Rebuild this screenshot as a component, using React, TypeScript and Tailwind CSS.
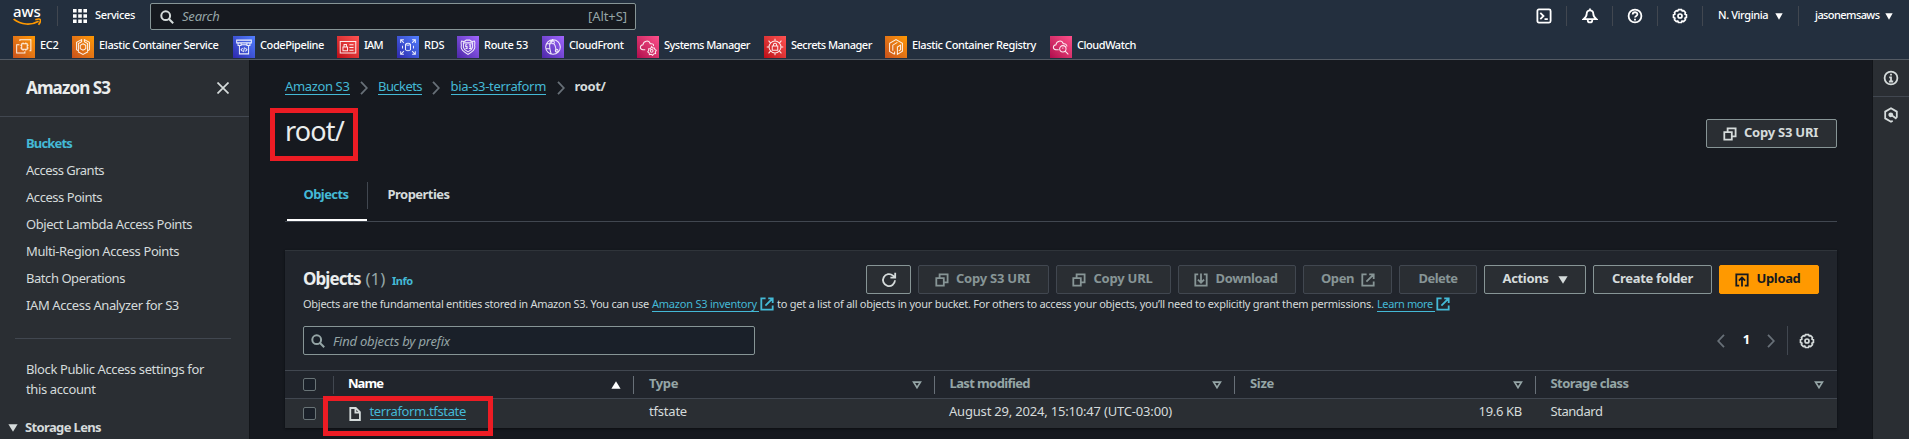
import type { ReactNode } from "react";

const svgBase = "fill-none stroke-current";

function CopyIcon() {
  return (
    <svg viewBox="0 0 14 14" className={`h-[14px] w-[14px] shrink-0 stroke-[1.8] ${svgBase}`}>
      <path d="M1.3 5.2h7.5v7.5H1.3zM4.6 4.8V1.3h8v8H9.2" />
    </svg>
  );
}

function ExternalIcon() {
  return (
    <svg viewBox="0 0 14 14" className={`h-[14px] w-[14px] shrink-0 stroke-[1.8] ${svgBase}`}>
      <path d="M5.6 1.3H1.3v11.4h11.4V8.4M8.2 1.3h4.5v4.6M12.4 1.6 5.4 8.6" />
    </svg>
  );
}

function DownloadIcon() {
  return (
    <svg viewBox="0 0 14 14" className={`h-[14px] w-[14px] shrink-0 stroke-[1.8] ${svgBase}`}>
      <path d="M4.2 1.3H1.3v11.4h11.4V1.3H9.8M7 .6v9M3.9 6.6 7 9.7l3.1-3.1" />
    </svg>
  );
}

function UploadIcon() {
  return (
    <svg viewBox="0 0 14 14" className={`h-[14px] w-[14px] shrink-0 stroke-[1.8] ${svgBase}`}>
      <path d="M4.2 12.7H1.3V1.3h11.4v11.4H9.8M7 13.6V4.8M3.9 7.6 7 4.5l3.1 3.1" />
    </svg>
  );
}

function GearIcon() {
  return (
    <svg viewBox="0 0 16 16" className={`h-[16px] w-[16px] shrink-0 stroke-[1.7] ${svgBase}`}>
      <path d="M6.5 1.6h3l.7 1.3 1.5-.3 1.7 1.8-.4 1.6 1.4.8v2.6l-1.4.8.4 1.5-1.8 1.8-1.5-.4-.7 1.4h-3l-.7-1.4-1.4.4-1.8-1.8.4-1.5-1.4-.8V6.8l1.4-.8-.4-1.5 1.8-1.9 1.4.4z" />
      <circle cx="8" cy="8" r="2" />
    </svg>
  );
}

function SearchIcon({ className = "" }: { className?: string }) {
  return (
    <svg viewBox="0 0 14 14" className={`h-[14px] w-[14px] shrink-0 stroke-2 ${svgBase} ${className}`}>
      <circle cx="5.7" cy="5.7" r="4.4" />
      <path d="m9 9 4.2 4.2" />
    </svg>
  );
}

function Chevron({ left = false, className = "" }: { left?: boolean; className?: string }) {
  return (
    <svg viewBox="0 0 8 14" className={`h-[14px] w-[8px] shrink-0 stroke-[1.8] ${svgBase} ${className}`}>
      <path d={left ? "M7 .8 1.2 7 7 13.2" : "M1 .8 6.8 7 1 13.2"} />
    </svg>
  );
}

function Caret({ up = false, small = false, className = "" }: { up?: boolean; small?: boolean; className?: string }) {
  return (
    <svg
      viewBox="0 0 10 8"
      preserveAspectRatio="none"
      className={`shrink-0 fill-current ${small ? "h-[7px] w-[8px]" : "h-[8px] w-[10px]"} ${className}`}
    >
      <path d={up ? "M.4 7.8 5 .2l4.6 7.6z" : "M.4.2h9.2L5 7.8z"} />
    </svg>
  );
}

function SortCaret() {
  return (
    <svg viewBox="0 0 10 8" className={`h-[8px] w-[10px] shrink-0 stroke-[1.7] ${svgBase}`}>
      <path d="M1.6 1.1h6.8L5 6.6z" />
    </svg>
  );
}

const orange = "bg-linear-to-tr from-[#c8511b] to-[#ff9900]";
const blue = "bg-linear-to-tr from-[#2e27ad] to-[#527fff]";
const red = "bg-linear-to-tr from-[#bd0816] to-[#ff5252]";
const purple = "bg-linear-to-tr from-[#4d27a8] to-[#a166ff]";
const pink = "bg-linear-to-tr from-[#b0084d] to-[#ff4f8b]";

const services: { name: string; text: string; bg: string; icon: string }[] = [
  {
    name: "EC2",
    text: "w-[32px] tracking-[-0.3px]",
    bg: orange,
    icon: "M9.5 8.5h6v6h-6zM11 8.5V7M14 8.5V7M11 16v-1.5M14 16v-1.5M8 10h1.5M8 13h1.5M15.5 10H17M15.5 13H17M7.5 5.5V4h12v12H18M7 9.5H4v9h9v-2",
  },
  {
    name: "Elastic Container Service",
    text: "w-[134px] tracking-[-0.36px]",
    bg: orange,
    icon: "m10.5 4-5.5 3v8l2 1.2V8.3l3.5-2zM13.5 4l5.500 3v8l-2 1.200V8.300l-3.500-2zM6.500 17.200 12 20l5.500-2.800M12 8.500l3 1.700v3.600l-3 1.700-3-1.700v-3.600z",
  },
  {
    name: "CodePipeline",
    text: "w-[77px] tracking-[-0.4px]",
    bg: blue,
    icon: "M4 4.5h16v3H4zM5.5 7.5v2.8h3.3V7.5M15.2 7.5v2.8h3.3V7.5M8.8 9.5h6.4M7 10.5v9h10v-9M10.5 13.2 8.8 15l1.700 1.800M13.500 13.200l1.700 1.800-1.700 1.800M12.500 12.500l-1 5",
  },
  {
    name: "IAM",
    text: "w-[33px] tracking-[-0.8px]",
    bg: red,
    icon: "M3.5 6h17v12.5h-17zM6.5 12h5v4h-5zM7.7 12V9.3h2.6V12M13.5 9.5h4.5M13.5 12.5H18M13.5 15.5H18",
  },
  {
    name: "RDS",
    text: "w-[33px] tracking-[-0.3px]",
    bg: blue,
    icon: "M4 7.5V4h3.5M4.3 4.3 7.5 7.5M16.5 4H20v3.5M19.7 4.3l-3.2 3.2M4 16.5V20h3.5M4.3 19.7l3.2-3.2M16.5 20H20v-3.5M19.7 19.7l-3.2-3.2M9.3 9v6c1 1.3 4.4 1.3 5.4 0V9c-1-1.3-4.4-1.3-5.4 0 1 1.3 4.4 1.3 5.4 0M6 10.5v3M18 10.5v3",
  },
  {
    name: "Route 53",
    text: "w-[58px] tracking-[-0.32px]",
    bg: purple,
    icon: "M5 5.5c2 .8 4 .3 5-1h4c1 1.3 3 1.8 5 1 1.5 2-.5 4 .5 6.5 0 4-4 6-7.5 8-3.5-2-7.5-4-7.5-8 1-2.5-1-4.5.5-6.5zM7 7.5h10v5c-.5 2.5-3 3.7-5 4.8-2-1.1-4.5-2.3-5-4.8zM11.2 9.5H9.5v2h1.5v2H9.3M13 9.5h2l-1 1.7 1 .5v1.800h-2",
  },
  {
    name: "CloudFront",
    text: "w-[68px] tracking-[-0.4px]",
    bg: purple,
    icon: "M12 4a8 8 0 1 0 0 16 8 8 0 0 0 0-16zM12 4c-3 1-4 5-3.5 9 .3 3 1 5 1.5 6.5M5 8.5h5M10.5 7a1.5 1.5 0 1 0 3 0 1.5 1.5 0 0 0-3 0M13 8.5c2 2.5 2.5 6 2 9.5M14.5 16a1.5 1.5 0 1 0 3 0 1.5 1.5 0 0 0-3 0M4.5 14h4",
  },
  {
    name: "Systems Manager",
    text: "w-[100px] tracking-[-0.52px]",
    bg: pink,
    icon: "M9 15H6.5C2.5 14.5 3 10 6.5 9.5 7 5 13 4 14.5 8.5 17 7.8 18.5 9.5 18 11M16 11.5l1 1.5h2l.5 1.7 1.5 1-1 1.8.3 1.7-2 .3-1.3 1.5-1.5-1-2 .3-.3-2-1.5-1 1-1.5v-2h2zM14.5 16.2a1.5 1.5 0 1 0 3 0 1.5 1.5 0 0 0-3 0",
  },
  {
    name: "Secrets Manager",
    text: "w-[94px] tracking-[-0.5px]",
    bg: red,
    icon: "M12 5.5a6.5 6.5 0 1 0 0 13 6.5 6.5 0 0 0 0-13zM9 11h6v4.5H9zM10.3 11V9.3c0-1.8 3.4-1.8 3.4 0V11M12 3v2.5M12 18.5V21M3 12h2.5M18.5 12H21M5 5l2 2.5M19 5l-2 2.5M5 19l2-2.5M19 19l-2-2.5",
  },
  {
    name: "Elastic Container Registry",
    text: "w-[138px] tracking-[-0.39px]",
    bg: orange,
    icon: "M10.5 20 5 16.8V8l7-4 7 4v8.5L13.5 20V12l3.5-2v5l-2 1.2M10.5 20V17M8.5 16V10l5-3",
  },
  {
    name: "CloudWatch",
    text: "w-[70px] tracking-[-0.45px]",
    bg: pink,
    icon: "M9.5 15H6.5C2.5 14.5 3 10 6.5 9.5 7 5 13 4 14.5 8.5c2.5-.5 4 1 4 3M14 10.5a3.5 3.5 0 1 0 0 7 3.5 3.5 0 0 0 0-7zM16.5 16.5l3.5 3.5M14 12.5v1.5",
  },
];

function HeaderItem({ width, children }: { width: string; children: ReactNode }) {
  return <div className={`flex h-[20px] items-center justify-center border-r border-[#414750] ${width}`}>{children}</div>;
}

function Header() {
  return (
    <header className="h-[60px] shrink-0 border-b border-[#545b64] bg-[#232f3e] text-[11px] font-medium text-white">
      <div className="flex h-[36px] items-start pl-[13px]">
        <div className="relative h-[26px] w-[44px]">
          <div className="pt-[4px] text-[15px] leading-[14px] font-medium tracking-[-0.1px]">aws</div>
          <svg viewBox="0 0 28 8" className="absolute top-[18px] left-0 h-[8px] w-[28px] fill-none stroke-[#ff9900] stroke-[1.7]">
            <path d="M.6 1.2c7.5 5.8 17.8 6.3 25 2M22.3 1.7c2-.6 4.6-.7 5 0 .3.8-.3 3.2-1.8 5" />
          </svg>
        </div>
        <div className="mt-[6px] h-[20px] w-[16px] border-l border-[#414750]" />
        <svg viewBox="0 0 14 14" className="mt-[9px] h-[14px] w-[14px] fill-white">
          <path d="M0 0h3.600v3.600H0zM5.200 0h3.600v3.600H5.200zM10.400 0H14v3.600h-3.600zM0 5.200h3.600v3.600H0zM5.200 5.200h3.600v3.600H5.200zM10.400 5.200H14v3.600h-3.600zM0 10.400h3.600V14H0zM5.200 10.400h3.600V14H5.200zM10.400 10.400H14V14h-3.600z" />
        </svg>
        <div className="ml-[8px] w-[55px] leading-[30px] tracking-[-0.36px]">Services</div>
        <div className="mt-[3px] flex h-[27px] w-[486px] items-center rounded-[2px] border border-[#879596] bg-[#16191f] pr-[8px] pl-[9px] text-[13px] font-normal text-[#95a5a6]">
          <SearchIcon className="text-[#d5dbdb]" />
          <span className="-mt-[2px] ml-[8px] flex-1 leading-[22px] tracking-[-0.21px] italic">Search</span>
          <span className="-mt-[2px] leading-[22px] tracking-[-0.07px]">[Alt+S]</span>
        </div>
        <div className="mt-[6px] ml-auto flex h-[20px]">
          <HeaderItem width="w-[45px]">
            <svg viewBox="0 0 16 16" className={`h-[16px] w-[16px] stroke-[1.8] ${svgBase}`}>
              <rect x="1.4" y="1.4" width="13.2" height="13.2" rx="1.5" />
              <path d="m4.3 4.800 3.200 3.200-3.200 3.200M8.500 11.200h3.300" />
            </svg>
          </HeaderItem>
          <HeaderItem width="w-[46px]">
            <svg viewBox="0 0 16 16" className={`h-[16px] w-[16px] stroke-[1.8] ${svgBase}`}>
              <path d="M8 2.300c-2.200 0-3.300 1.500-3.300 3.500C4.700 8.600 3.500 9.700 1.500 11.200h13c-2-1.500-3.200-2.600-3.200-5.400 0-2-1.100-3.500-3.300-3.500zM8 .5v2M5.800 11.500v1.300c0 2.200 4.400 2.200 4.400 0v-1.300" />
            </svg>
          </HeaderItem>
          <HeaderItem width="w-[45px]">
            <svg viewBox="0 0 16 16" className={`h-[16px] w-[16px] stroke-[1.8] ${svgBase}`}>
              <circle cx="8" cy="8" r="6.4" />
              <path d="M5.700 6.500c0-3 4.700-2.900 4.700-.2C10.400 8 8 7.800 8 9.600M8 10.800v1.600" />
            </svg>
          </HeaderItem>
          <HeaderItem width="w-[45px]">
            <GearIcon />
          </HeaderItem>
          <HeaderItem width="w-[96px]">
            <span className="-mt-[1px] w-[57px] tracking-[-0.4px]">N. Virginia</span>
            <Caret small />
          </HeaderItem>
          <div className="flex items-center pr-[16px] pl-[16px]">
            <span className="-mt-[1px] w-[70px] tracking-[-0.58px]">jasonemsaws</span>
            <Caret small />
          </div>
        </div>
      </div>
      <nav className="flex h-[22px] pl-[13px]">
        {services.map((s) => (
          <div key={s.name} className="flex">
            <div className={`flex h-[22px] w-[22px] items-center justify-center ${s.bg}`}>
              <svg viewBox="0 0 24 24" className="h-[22px] w-[22px] fill-none stroke-white/90 stroke-[1.1]">
                <path d={s.icon} />
              </svg>
            </div>
            <span className={`ml-[5px] leading-[18px] whitespace-nowrap ${s.text}`}>{s.name}</span>
          </div>
        ))}
      </nav>
    </header>
  );
}

const links: [string, string][] = [
  ["Buckets", "font-bold text-[#44b9d6] tracking-[-0.83px]"],
  ["Access Grants", "tracking-[-0.52px]"],
  ["Access Points", "tracking-[-0.46px]"],
  ["Object Lambda Access Points", "tracking-[-0.45px]"],
  ["Multi-Region Access Points", "tracking-[-0.4px]"],
  ["Batch Operations", "tracking-[-0.45px]"],
  ["IAM Access Analyzer for S3", "tracking-[-0.4px]"],
];

function Sidebar() {
  return (
    <aside className="w-[250px] shrink-0 overflow-hidden border-r border-[#121519] bg-[#2a2e33] text-[13px] text-[#d5dbdb]">
      <div className="flex h-[57px] items-start justify-between border-b border-[#414750] pr-[20px] pl-[26px]">
        <h2 className="text-[17px] leading-[55px] font-bold tracking-[-0.88px] text-[#eaeded]">Amazon S3</h2>
        <svg viewBox="0 0 12 12" className={`mt-[22px] h-[12px] w-[12px] stroke-[1.7] ${svgBase}`}>
          <path d="m.5.5 11 11M11.500.5l-11 11" />
        </svg>
      </div>
      <ul className="pt-[13px] pl-[26px]">
        {links.map(([label, cls]) => (
          <li key={label} className={`h-[27px] leading-[27px] ${cls}`}>
            {label}
          </li>
        ))}
      </ul>
      <div className="mx-[15px] mt-[19px] w-[216px] border-t border-[#414750]" />
      <p className="mt-[20px] pl-[26px] leading-[20px] tracking-[-0.38px]">
        Block Public Access settings for
        <br />
        this account
      </p>
      <div className="mt-[18px] flex items-center pl-[8px]">
        <Caret className="mt-[2px]" />
        <span className="ml-[7px] leading-[20px] font-bold tracking-[-0.64px]">Storage Lens</span>
      </div>
    </aside>
  );
}

function Button({
  width,
  disabled = false,
  primary = false,
  children,
}: {
  width: string;
  disabled?: boolean;
  primary?: boolean;
  children: ReactNode;
}) {
  const tone = primary
    ? "bg-[#ff9900] border-[#ff9900] text-[#16191f]"
    : disabled
      ? "bg-[#2a2e33] border-[#414750] text-[#879596]"
      : "bg-[#2a2e33] border-[#879596] text-[#d5dbdb]";
  return (
    <button className={`flex h-[29px] shrink-0 items-center justify-center rounded-[2px] border text-[13px] font-bold whitespace-nowrap ${width} ${tone}`}>
      {children}
    </button>
  );
}

function Checkbox() {
  return <div className="h-[13px] w-[13px] rounded-[2px] border border-[#697477] bg-[#1a2029]" />;
}

function HeadCell({ width, label, text, up = false, last = false }: { width: string; label: string; text: string; up?: boolean; last?: boolean }) {
  return (
    <div className={`flex h-[18px] items-center justify-between ${last ? "pr-[13px]" : "border-r border-[#687078] pr-[12px]"} ${width}`}>
      <span className={`-mt-[4px] leading-[18px] font-bold ${text}`}>{label}</span>
      {up ? <Caret up className="text-white" /> : <SortCaret />}
    </div>
  );
}

function ObjectsPanel() {
  return (
    <section className="mt-[28px] h-[178px] w-[1552px] border-t border-[#2f343a] bg-[#21252c] text-[13px] text-[#d5dbdb] shadow-[0_1px_2px_#0c0e12]">
      <div className="flex h-[44px] items-start pt-[14px] pr-[18px] pl-[18px]">
        <h2 className="flex flex-1 text-[17px] leading-[28px] whitespace-nowrap">
          <span className="w-[62.5px] font-bold tracking-[-0.92px] text-[#eaeded]">Objects</span>
          <span className="w-[26.5px] text-[#95a5a6]">(1)</span>
          <span className="pt-[2px] text-[11px] font-bold tracking-[-0.5px] text-[#44b9d6]">Info</span>
        </h2>
        <div className="flex gap-[7px]">
          <Button width="w-[45px]">
            <svg viewBox="0 0 16 16" className={`h-[16px] w-[16px] stroke-[1.8] ${svgBase}`}>
              <path d="M14 8.300A6 6 0 1 1 12 3.600l1.800 1.600M14.200.8v4.800H9.400" />
            </svg>
          </Button>
          <Button width="w-[131px]" disabled>
            <CopyIcon />
            <span className="-mt-[2px] mr-[2px] ml-[7px] tracking-[-0.24px]">Copy S3 URI</span>
          </Button>
          <Button width="w-[115px]" disabled>
            <CopyIcon />
            <span className="-mt-[2px] mr-[2px] ml-[7px] tracking-[-0.23px]">Copy URL</span>
          </Button>
          <Button width="w-[118px]" disabled>
            <DownloadIcon />
            <span className="-mt-[2px] mr-[2px] ml-[7px] tracking-[-0.37px]">Download</span>
          </Button>
          <Button width="w-[89px]" disabled>
            <span className="-mt-[2px] mr-[7px] ml-[1px] tracking-[-0.43px]">Open</span>
            <ExternalIcon />
          </Button>
          <Button width="w-[78px]" disabled>
            <span className="-mt-[2px] tracking-[-0.55px]">Delete</span>
          </Button>
          <Button width="w-[102px]">
            <span className="-mt-[2px] mr-[9px] tracking-[-0.33px]">Actions</span>
            <Caret />
          </Button>
          <Button width="w-[119px]">
            <span className="-mt-[2px] tracking-[-0.31px]">Create folder</span>
          </Button>
          <Button width="w-[100px]" primary>
            <UploadIcon />
            <span className="-mt-[2px] mr-[2px] ml-[7px] tracking-[-0.34px]">Upload</span>
          </Button>
        </div>
      </div>
      <div className="flex h-[17px] pl-[18px] text-[11px] leading-[17px] whitespace-nowrap">
        <span className="w-[349px] tracking-[-0.27px]">Objects are the fundamental entities stored in Amazon S3. You can use</span>
        <span className="w-[107px] border-b border-[#44b9d6] tracking-[-0.22px] text-[#44b9d6]">Amazon S3 inventory</span>
        <span className="w-[18px] pt-[2px] pl-[1px] text-[#44b9d6]">
          <ExternalIcon />
        </span>
        <span className="w-[600px] tracking-[-0.25px]">
          to get a list of all objects in your bucket. For others to access your objects, you’ll need to explicitly grant them permissions.
        </span>
        <span className="w-[58px] border-b border-[#44b9d6] tracking-[-0.4px] text-[#44b9d6]">Learn more</span>
        <span className="pt-[2px] pl-[1px] text-[#44b9d6]">
          <ExternalIcon />
        </span>
      </div>
      <div className="mt-[14px] flex h-[29px] items-center pl-[18px]">
        <div className="flex h-[29px] w-[452px] items-center rounded-[2px] border border-[#879596] bg-[#1a2029] pl-[7px] text-[#95a5a6]">
          <SearchIcon />
          <span className="ml-[8px] leading-[22px] tracking-[-0.2px] italic">Find objects by prefix</span>
        </div>
        <Chevron left className="ml-[962px] text-[#687078]" />
        <span className="-mt-[2px] ml-[16px] w-[11px] text-center font-bold text-white">1</span>
        <Chevron className="ml-[15px] text-[#687078]" />
        <div className="ml-[12px] h-[29px] w-[12px] border-l border-[#414750]" />
        <GearIcon />
      </div>
      <div className="mt-[15px] flex h-[28px] items-center border-t border-[#414750] pl-[18px] text-[#95a5a6]">
        <Checkbox />
        <div className="ml-[17px] h-[18px] w-[15px] border-l border-[#414750]" />
        <HeadCell width="w-[286px]" label="Name" text="tracking-[-0.95px] text-white" up />
        <HeadCell width="w-[301px] pl-[15px]" label="Type" text="tracking-[-0.41px]" />
        <HeadCell width="w-[300px] pl-[14.5px]" label="Last modified" text="tracking-[-0.61px]" />
        <HeadCell width="w-[301px] pl-[15px]" label="Size" text="tracking-[-0.31px]" />
        <HeadCell width="w-[301px] pl-[14.5px]" label="Storage class" text="tracking-[-0.54px]" last />
      </div>
      <div className="flex h-[30px] items-center border-t border-[#414750] bg-[#2a2e33] pl-[18px]">
        <Checkbox />
        <div className="ml-[33px] flex w-[300px] items-center">
          <svg viewBox="0 0 12 14" className={`h-[14px] w-[12px] stroke-[1.8] ${svgBase}`}>
            <path d="M1.300 1h5.400l4.200 4.200V13H1.300zM6.400 1v4.600h4.500" />
          </svg>
          <span className="-mt-[4px] ml-[8.5px] border-b border-[#44b9d6] leading-[15px] tracking-[-0.36px] text-[#44b9d6]">terraform.tfstate</span>
        </div>
        <span className="-mt-[3px] w-[300px] tracking-[-0.2px]">tfstate</span>
        <span className="-mt-[3px] w-[301px] tracking-[-0.19px]">August 29, 2024, 15:10:47 (UTC-03:00)</span>
        <span className="-mt-[3px] w-[272px] text-right tracking-[-0.31px]">19.6 KB</span>
        <span className="-mt-[3px] ml-[28.5px] tracking-[-0.45px]">Standard</span>
      </div>
    </section>
  );
}

const crumb = "border-b border-[#44b9d6] text-[#44b9d6]";

export default function App() {
  return (
    <div className="relative flex h-[439px] w-full flex-col overflow-hidden bg-[#16191f] font-['Noto_Sans',sans-serif]">
      <Header />
      <div className="flex min-h-0 flex-1">
        <Sidebar />
        <main className="min-w-0 flex-1 pt-[18px] pl-[35px]">
          <div className="flex h-[17px] text-[13px] leading-[16px] whitespace-nowrap">
            <span className={`w-[64.5px] tracking-[-0.36px] ${crumb}`}>Amazon S3</span>
            <Chevron className="mt-[3px] mr-[10px] ml-[10.5px] text-[#687078]" />
            <span className={`w-[44px] tracking-[-0.56px] ${crumb}`}>Buckets</span>
            <Chevron className="mt-[3px] mr-[11px] ml-[9.5px] text-[#687078]" />
            <span className={`w-[95.5px] tracking-[-0.3px] ${crumb}`}>bia-s3-terraform</span>
            <Chevron className="mt-[3px] mr-[10px] ml-[10.5px] text-[#687078]" />
            <span className="font-bold tracking-[-0.37px] text-[#d5dbdb]">root/</span>
          </div>
          <div className="flex h-[53px] w-[1552px] items-start justify-between pt-[15px]">
            <h1 className="mt-[5px] text-[27px] leading-[32px] tracking-[-0.82px] text-[#eaeded]">root/</h1>
            <div className="mt-[9px] flex">
              <Button width="w-[131px]">
                <CopyIcon />
                <span className="-mt-[2px] mr-[2px] ml-[7px] tracking-[-0.24px]">Copy S3 URI</span>
              </Button>
            </div>
          </div>
          <div className="mt-[34px] flex h-[40px] w-[1552px] border-b border-[#414750] text-[13px] font-bold">
            <div className="ml-[2px] h-[39px] w-[80px] border-b-2 border-white pl-[16.5px] leading-[24px] tracking-[-0.57px] text-[#44b9d6]">
              Objects
            </div>
            <div className="h-[27px] border-l border-[#414750] pl-[19.5px] leading-[24px] tracking-[-0.54px] text-[#d5dbdb]">Properties</div>
          </div>
          <ObjectsPanel />
        </main>
        <aside className="w-[37px] shrink-0 border-l border-[#121519] bg-[#2a2e33] text-[#d5dbdb]">
          <div className="flex h-[37px] items-center justify-center border-b border-[#414750]">
            <svg viewBox="0 0 16 16" className={`h-[16px] w-[16px] stroke-[1.8] ${svgBase}`}>
              <circle cx="8" cy="8" r="6.4" />
              <path d="M8 3.800v1.700M6.200 7.300H8v3.900M5.900 11.500h4.300" />
            </svg>
          </div>
          <div className="flex h-[35px] items-center justify-center">
            <svg viewBox="0 0 16 16" className={`h-[16px] w-[16px] stroke-[1.8] ${svgBase}`}>
              <path d="M9.700 13.800 8 14.800l-5.800-3.400V4.600L8 1.200l5.800 3.400v6.200M8 7.700l5.500 4" />
              <circle cx="7.8" cy="7.8" r="1.5" className="fill-current" />
            </svg>
          </div>
        </aside>
      </div>
      <div className="pointer-events-none absolute top-[108px] left-[270px] h-[53px] w-[88px] border-[5px] border-[#ed1c24]" />
      <div className="pointer-events-none absolute top-[396px] left-[323px] h-[40px] w-[170px] border-[5px] border-[#ed1c24]" />
    </div>
  );
}
